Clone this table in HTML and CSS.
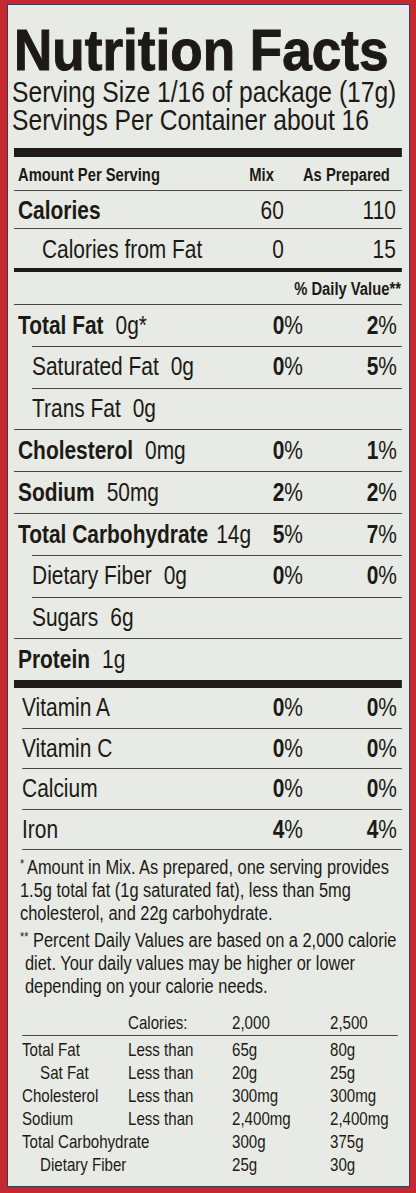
FILE: index.html
```html
<!DOCTYPE html>
<html lang="en">
  <head>
    <meta charset="UTF-8" />
    <meta name="viewport" content="width=device-width, initial-scale=1.0" />
    <title>Nutrition Facts</title>
    <link rel="stylesheet" href="styles.css">
  </head>
  <body>
    <div class="label">
      <h1 class="title">Nutrition Facts</h1>
      <!-- condensed type: laid out wide, then squeezed -->
      <div class="narrow">
        <div class="serving">
          <div>Serving Size 1/16 of package (17g)</div>
          <div>Servings Per Container about 16</div>
        </div>

        <div class="bar thick"></div>
        <div class="row head">
          <span class="name">Amount Per Serving</span>
          <span class="mix">Mix</span>
          <span class="prep">As Prepared</span>
        </div>
        <div class="row cal">
          <span class="name"><b>Calories</b></span>
          <span class="mix">60</span>
          <span class="prep">110</span>
        </div>
        <div class="row cal fat">
          <span class="name">Calories from Fat</span>
          <span class="mix">0</span>
          <span class="prep">15</span>
        </div>
        <div class="bar mid"></div>
        <div class="row dv">% Daily Value**</div>

        <div class="row nut">
          <span class="name"><b>Total Fat</b><span class="amt">0g*</span></span>
          <span class="mix"><b>0</b>%</span>
          <span class="prep"><b>2</b>%</span>
        </div>
        <div class="row nut sub">
          <span class="name">Saturated Fat<span class="amt">0g</span></span>
          <span class="mix"><b>0</b>%</span>
          <span class="prep"><b>5</b>%</span>
        </div>
        <div class="row nut sub">
          <span class="name">Trans Fat<span class="amt">0g</span></span>
        </div>
        <div class="row nut">
          <span class="name"><b>Cholesterol</b><span class="amt">0mg</span></span>
          <span class="mix"><b>0</b>%</span>
          <span class="prep"><b>1</b>%</span>
        </div>
        <div class="row nut">
          <span class="name"><b>Sodium</b><span class="amt">50mg</span></span>
          <span class="mix"><b>2</b>%</span>
          <span class="prep"><b>2</b>%</span>
        </div>
        <div class="row nut">
          <span class="name"><b>Total Carbohydrate</b><span class="amt close">14g</span></span>
          <span class="mix"><b>5</b>%</span>
          <span class="prep"><b>7</b>%</span>
        </div>
        <div class="row nut sub">
          <span class="name">Dietary Fiber<span class="amt">0g</span></span>
          <span class="mix"><b>0</b>%</span>
          <span class="prep"><b>0</b>%</span>
        </div>
        <div class="row nut sub">
          <span class="name">Sugars<span class="amt">6g</span></span>
        </div>
        <div class="row nut">
          <span class="name"><b>Protein</b><span class="amt">1g</span></span>
        </div>
        <div class="bar thick low"></div>

        <div class="row vit">
          <span class="name">Vitamin A</span>
          <span class="mix"><b>0</b>%</span>
          <span class="prep"><b>0</b>%</span>
        </div>
        <div class="row vit">
          <span class="name">Vitamin C</span>
          <span class="mix"><b>0</b>%</span>
          <span class="prep"><b>0</b>%</span>
        </div>
        <div class="row vit">
          <span class="name">Calcium</span>
          <span class="mix"><b>0</b>%</span>
          <span class="prep"><b>0</b>%</span>
        </div>
        <div class="row vit">
          <span class="name">Iron</span>
          <span class="mix"><b>4</b>%</span>
          <span class="prep"><b>4</b>%</span>
        </div>

        <div class="notes">
          <p class="note"><span class="star">*</span>Amount in Mix. As prepared, one serving provides<br>1.5g total fat (1g saturated fat), less than 5mg<br>cholesterol, and 22g carbohydrate.</p>
          <p class="note two"><span class="star">**</span>Percent Daily Values are based on a 2,000 calorie<br>diet. Your daily values may be higher or lower<br>depending on your calorie needs.</p>
        </div>

        <div class="chart">
          <div class="trow thead">
            <span></span><span>Calories:</span><span>2,000</span><span>2,500</span>
          </div>
          <div class="tbody">
            <div class="trow"><span>Total Fat</span><span>Less than</span><span>65g</span><span>80g</span></div>
            <div class="trow"><span class="in">Sat Fat</span><span>Less than</span><span>20g</span><span>25g</span></div>
            <div class="trow"><span>Cholesterol</span><span>Less than</span><span>300mg</span><span>300mg</span></div>
            <div class="trow"><span>Sodium</span><span>Less than</span><span>2,400mg</span><span>2,400mg</span></div>
            <div class="trow"><span class="wide">Total Carbohydrate</span><span>300g</span><span>375g</span></div>
            <div class="trow"><span class="wide in">Dietary Fiber</span><span>25g</span><span>30g</span></div>
          </div>
        </div>
      </div>
    </div>
  </body>
</html>
```

FILE: styles.css
```css
* {
  margin: 0;
  padding: 0;
  box-sizing: border-box;
}
body {
  background-color: #c5282d;
  font-family: "Liberation Sans", Arial, sans-serif;
  color: #1d1a15;
}
.label {
  margin: 4px 6px 0 7px;
  height: 1183px;
  background-color: #e7eae5;
  border: 1px solid #3f3a5a;
  padding: 16px 7px 0 6px;
}
.title {
  font-weight: bold;
  font-size: 58px;
  line-height: 57px;
  -webkit-text-stroke: 1px #1d1a15;
  white-space: nowrap;
  width: 424px;
  transform: scaleX(0.915);
  transform-origin: 0 0;
}
/* all widths below are in the unsqueezed scale (visual / 0.82) */
.narrow {
  width: 473px;
  transform: scaleX(0.82);
  transform-origin: 0 0;
}
.serving {
  font-size: 30px;
  line-height: 28px;
  margin-left: -2.4px;
  white-space: nowrap;
}
.bar {
  background-color: #1f1c18;
}
.thick {
  height: 9px;
  margin-top: 14px;
}
.thick.low {
  height: 8px;
  margin-top: 0;
}
.mid {
  height: 4px;
}
.row {
  display: flex;
  align-items: center;
  white-space: nowrap;
  padding-right: 6.1px;
  font-size: 25.5px;
  line-height: 1;
}
.name {
  flex: 1;
  min-width: 0;
  padding-left: 4.9px;
}
.mix {
  width: 97.6px;
  text-align: right;
}
.prep {
  width: 114.6px;
  text-align: right;
}
.head {
  height: 33px;
  font-size: 18px;
  font-weight: bold;
  padding-top: 2px;
}
.head .mix {
  padding-right: 35.4px;
}
.head .prep {
  padding-right: 8.5px;
}
.cal {
  height: 38px;
  border-top: 1px solid #4a453e;
  padding-top: 3px;
}
.cal .mix {
  padding-right: 23.2px;
}
.cal .prep {
  padding-right: 1.2px;
}
.cal.fat {
  height: 40px;
}
.cal.fat .name {
  padding-left: 34.1px;
}
.dv {
  height: 32px;
  justify-content: flex-end;
  font-size: 18px;
  font-weight: bold;
  padding-right: 1.2px;
  padding-top: 2px;
}
.nut {
  height: 41.8px;
  border-top: 1px solid #4a453e;
}
.amt {
  margin-left: 14.6px;
}
.amt.close {
  margin-left: 9.8px;
}
.sub {
  margin-left: 22px;
}
.sub .name {
  padding-left: 0;
}
.vit {
  height: 40.5px;
  margin-left: 9.8px;
  border-bottom: 1px solid #4a453e;
}
.vit .name {
  padding-left: 0;
}
.notes {
  padding: 5.5px 0 0 7.3px;
  font-size: 20px;
  line-height: 23px;
  white-space: nowrap;
}
.star {
  font-size: 13px;
  vertical-align: 6px;
  line-height: 0;
  margin-right: 3.5px;
}
.note.two {
  margin-top: 4px;
  padding-left: 6.1px;
}
.note.two .star {
  margin-left: -6.1px;
  margin-right: 5.7px;
}
.chart {
  margin: 12.5px 4.9px 0 9.8px;
  font-size: 18.4px;
  white-space: nowrap;
}
.trow {
  display: grid;
  grid-template-columns: 129.3px 126.8px 119.5px 1fr;
  line-height: 23px;
}
.thead {
  line-height: 25px;
  border-bottom: 1px solid #4a453e;
}
.tbody {
  padding-top: 1.5px;
}
.in {
  padding-left: 22px;
}
.wide {
  grid-column: span 2;
}
```
